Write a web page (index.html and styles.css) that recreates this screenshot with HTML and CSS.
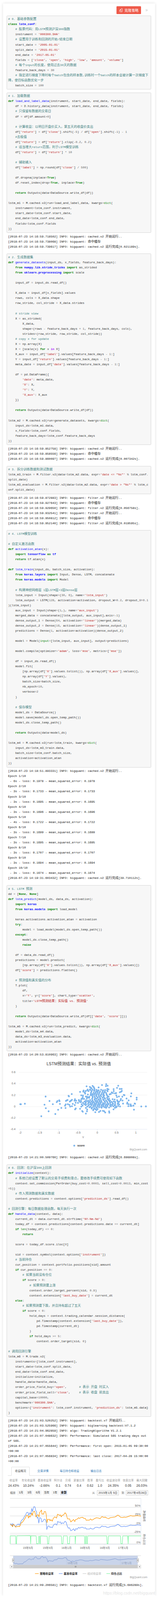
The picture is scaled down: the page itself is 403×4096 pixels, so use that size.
FILE: index.html
```html
<!DOCTYPE html>
<html lang="zh">
<head>
<meta charset="utf-8">
<title>LSTM</title>
<link rel="stylesheet" href="styles.css">
</head>
<body>
<main class="card">
<header class="head">
<a class="clone"><svg class="clone-ico" viewBox="0 0 16 18"><path d="M8 1.2h3.6a2.2 2.2 0 0 1 2.2 2.2v10.8a2.2 2.2 0 0 1-2.2 2.2H7.5"/><path d="M5.5 5 1.6 9v5.3a1.7 1.7 0 0 0 1.7 1.7h3.2a1.7 1.7 0 0 0 1.7-1.7V5zM5.5 5v4H1.6"/></svg>克隆策略</a>
<svg class="fold" viewBox="0 0 12 12"><path d="M1.5 1.5 6 6l-4.500 4.500M6.500 1.500 11 6l-4.500 4.500"/></svg>
</header>

<pre class="code"><i class="c"># 0. <i class="z">基础参数配置</i></i>
<i class="k">class</i> <i class="n">lstm_conf</i>:
    <i class="c"># <i class="z">股票代码：用</i>LSTM<i class="z">预测沪深</i>300<i class="z">指数</i></i>
    instrument <i class="o">=</i> <i class="s">'000300.SHA'</i>
    <i class="c"># <i class="z">设置用于训练和回测的开始</i>/<i class="z">结束日期</i></i>
    start_date <i class="o">=</i> <i class="s">'2005-01-01'</i>
    split_date <i class="o">=</i> <i class="s">'2015-01-01'</i>
    end_date <i class="o">=</i> <i class="s">'2017-05-01'</i>
    fields <i class="o">=</i> [<i class="s">'close'</i>, <i class="s">'open'</i>, <i class="s">'high'</i>, <i class="s">'low'</i>, <i class="s">'amount'</i>, <i class="s">'volume'</i>]
    <i class="c"># <i class="z">每个</i>input<i class="z">的长度，使用过去</i>30<i class="z">天的数据</i></i>
    feature_back_days <i class="o">=</i> <i class="m">30</i>
    <i class="c"># <i class="z">指定进行梯度下降时每个</i>batch<i class="z">包含的样本数</i>,<i class="z">训练时一个</i>batch<i class="z">的样本会被计算一次梯度下</i></i>
<i class="c"><i class="z">降，使目标函数优化一步</i></i>
    batch_size <i class="o">=</i> <i class="m">100</i></pre>

<pre class="code"><i class="c"># 1. <i class="z">加载数据</i></i>
<i class="k">def</i> <i class="f">load_and_label_data</i>(instrument, start_date, end_date, fields):
    df <i class="o">=</i> D<i class="o">.</i>history_data(instrument, start_date, end_date, fields)
    <i class="c"># <i class="z">只保留有数据的交易日</i></i>
    df <i class="o">=</i> df[df<i class="o">.</i>amount<i class="o">&gt;</i><i class="m">0</i>]

    <i class="c"># <i class="z">计算收益：以明日开盘价买入，第五天的收盘价卖出</i></i>
    df[<i class="s">'return'</i>] <i class="o">=</i> df[<i class="s">'close'</i>]<i class="o">.</i>shift(<i class="o">-</i><i class="m">5</i>) <i class="o">/</i> df[<i class="s">'open'</i>]<i class="o">.</i>shift(<i class="o">-</i><i class="m">1</i>) <i class="o">-</i> <i class="m">1</i>
    <i class="c">#<i class="z">去极值</i></i>
    df[<i class="s">'return'</i>] <i class="o">=</i> df[<i class="s">'return'</i>]<i class="o">.</i>clip(<i class="o">-</i><i class="m">0.2</i>, <i class="m">0.2</i>)
    <i class="c"># <i class="z">适当增大</i>return<i class="z">范围，利于</i>LSTM<i class="z">模型训练</i></i>
    df[<i class="s">'return'</i>] <i class="o">=</i> df[<i class="s">'return'</i>] <i class="o">*</i> <i class="m">10</i>

    <i class="c"># <i class="z">辅助输入</i></i>
    df[<i class="s">'label'</i>] <i class="o">=</i> np<i class="o">.</i>round(df[<i class="s">'close'</i>] <i class="o">/</i> <i class="m">500</i>)

    df<i class="o">.</i>dropna(inplace<i class="o">=</i><i class="k">True</i>)
    df<i class="o">.</i>reset_index(drop<i class="o">=</i><i class="k">True</i>, inplace<i class="o">=</i><i class="k">True</i>)

    <i class="k">return</i> Outputs(data<i class="o">=</i>DataSource<i class="o">.</i>write_df(df))

lstm_m1 <i class="o">=</i> M<i class="o">.</i>cached<i class="o">.</i>v2(run<i class="o">=</i>load_and_label_data, kwargs<i class="o">=</i><i class="b">dict</i>(
    instrument<i class="o">=</i>lstm_conf<i class="o">.</i>instrument,
    start_date<i class="o">=</i>lstm_conf<i class="o">.</i>start_date,
    end_date<i class="o">=</i>lstm_conf<i class="o">.</i>end_date,
    fields<i class="o">=</i>lstm_conf<i class="o">.</i>fields
))</pre>
<pre class="log">[2018-07-23 14:16:59.718502] INFO: bigquant: cached.v2 <i class="z">开始运行</i>..
[2018-07-23 14:16:59.738068] INFO: bigquant: <i class="z">命中缓存</i>
[2018-07-23 14:16:59.739617] INFO: bigquant: cached.v2 <i class="z">运行完成</i>[0.021189s].</pre>

<pre class="code"><i class="c"># 2. <i class="z">生成数据集</i></i>
<i class="k">def</i> <i class="f">generate_datasets</i>(input_ds, x_fields, feature_back_days):
    <i class="k">from</i> <i class="n">numpy.lib.stride_tricks</i> <i class="k">import</i> as_strided
    <i class="k">from</i> <i class="n">sklearn.preprocessing</i> <i class="k">import</i> scale

    input_df <i class="o">=</i> input_ds<i class="o">.</i>read_df()

    X_data <i class="o">=</i> input_df[x_fields]<i class="o">.</i>values
    rows, cols <i class="o">=</i> X_data<i class="o">.</i>shape
    row_stride, col_stride <i class="o">=</i> X_data<i class="o">.</i>strides

    <i class="c"># stride view</i>
    X <i class="o">=</i> as_strided(
        X_data,
        shape<i class="o">=</i>(rows <i class="o">-</i> feature_back_days <i class="o">+</i> <i class="m">1</i>, feature_back_days, cols),
        strides<i class="o">=</i>(row_stride, row_stride, col_stride))
    <i class="c"># copy x for update</i>
    X <i class="o">=</i> np<i class="o">.</i>array(X)
    X <i class="o">=</i> [scale(x) <i class="k">for</i> x <i class="w">in</i> X]
    X_aux <i class="o">=</i> input_df[<i class="s">'label'</i>]<i class="o">.</i>values[feature_back_days <i class="o">-</i> <i class="m">1</i>:]
    Y <i class="o">=</i> input_df[<i class="s">'return'</i>]<i class="o">.</i>values[feature_back_days <i class="o">-</i> <i class="m">1</i>:]
    meta_date <i class="o">=</i> input_df[<i class="s">'date'</i>]<i class="o">.</i>values[feature_back_days <i class="o">-</i> <i class="m">1</i>:]

    df <i class="o">=</i> pd<i class="o">.</i>DataFrame({
        <i class="s">'date'</i>: meta_date,
        <i class="s">'X'</i>: X,
        <i class="s">'Y'</i>: Y,
        <i class="s">'X_aux'</i>: X_aux
    })

    <i class="k">return</i> Outputs(data<i class="o">=</i>DataSource<i class="o">.</i>write_df(df))

lstm_m2 <i class="o">=</i> M<i class="o">.</i>cached<i class="o">.</i>v2(run<i class="o">=</i>generate_datasets, kwargs<i class="o">=</i><i class="b">dict</i>(
    input_ds<i class="o">=</i>lstm_m1<i class="o">.</i>data,
    x_fields<i class="o">=</i>lstm_conf<i class="o">.</i>fields,
    feature_back_days<i class="o">=</i>lstm_conf<i class="o">.</i>feature_back_days
))</pre>
<pre class="log">[2018-07-23 14:16:59.852758] INFO: bigquant: cached.v2 <i class="z">开始运行</i>..
[2018-07-23 14:16:59.858556] INFO: bigquant: <i class="z">命中缓存</i>
[2018-07-23 14:16:59.860097] INFO: bigquant: cached.v2 <i class="z">运行完成</i>[0.007342s].</pre>

<pre class="code"><i class="c"># 3. <i class="z">拆分训练数据和测试数据</i></i>
lstm_m3_train <i class="o">=</i> M<i class="o">.</i>filter<i class="o">.</i>v2(data<i class="o">=</i>lstm_m2<i class="o">.</i>data, expr<i class="o">=</i><i class="s">'date &lt;= "%s"'</i> <i class="o">%</i> lstm_conf<i class="o">.</i>
split_date)
lstm_m3_evaluation <i class="o">=</i> M<i class="o">.</i>filter<i class="o">.</i>v2(data<i class="o">=</i>lstm_m2<i class="o">.</i>data, expr<i class="o">=</i><i class="s">'date &gt; "%s"'</i> <i class="o">%</i> lstm_c
onf<i class="o">.</i>split_date)</pre>
<pre class="log">[2018-07-23 14:16:59.872883] INFO: bigquant: filter.v2 <i class="z">开始运行</i>..
[2018-07-23 14:16:59.927643] INFO: bigquant: <i class="z">命中缓存</i>
[2018-07-23 14:16:59.929650] INFO: bigquant: filter.v2 <i class="z">运行完成</i>[0.056758s].
[2018-07-23 14:16:59.932541] INFO: bigquant: filter.v2 <i class="z">开始运行</i>..
[2018-07-23 14:16:59.950812] INFO: bigquant: <i class="z">命中缓存</i>
[2018-07-23 14:16:59.952140] INFO: bigquant: filter.v2 <i class="z">运行完成</i>[0.019595s].</pre>

<pre class="code"><i class="c"># 4. LSTM<i class="z">模型训练</i></i>

<i class="c"># <i class="z">自定义激活函数</i></i>
<i class="k">def</i> <i class="f">activation_atan</i>(x):
    <i class="k">import</i> <i class="n">tensorflow</i> <i class="k">as</i> <i class="n">tf</i>
    <i class="k">return</i> tf<i class="o">.</i>atan(x)

<i class="k">def</i> <i class="f">lstm_train</i>(input_ds, batch_size, activation):
    <i class="k">from</i> <i class="n">keras.layers</i> <i class="k">import</i> Input, Dense, LSTM, concatenate
    <i class="k">from</i> <i class="n">keras.models</i> <i class="k">import</i> Model

    <i class="c"># <i class="z">构建神经网络层</i> 1<i class="z">层</i>LSTM<i class="z">层</i>+3<i class="z">层</i>Dense<i class="z">层</i></i>
    lstm_input <i class="o">=</i> Input(shape<i class="o">=</i>(<i class="m">30</i>, <i class="m">6</i>), name<i class="o">=</i><i class="s">'lstm_input'</i>)
    lstm_output <i class="o">=</i> LSTM(<i class="m">128</i>, activation<i class="o">=</i>activation, dropout_W<i class="o">=</i><i class="m">0.2</i>, dropout_U<i class="o">=</i><i class="m">0.1</i>
)(lstm_input)
    aux_input <i class="o">=</i> Input(shape<i class="o">=</i>(<i class="m">1</i>,), name<i class="o">=</i><i class="s">'aux_input'</i>)
    merged_data <i class="o">=</i> concatenate([lstm_output, aux_input],axis<i class="o">=-</i><i class="m">1</i>)
    dense_output_1 <i class="o">=</i> Dense(<i class="m">64</i>, activation<i class="o">=</i><i class="s">'linear'</i>)(merged_data)
    dense_output_2 <i class="o">=</i> Dense(<i class="m">16</i>, activation<i class="o">=</i><i class="s">'linear'</i>)(dense_output_1)
    predictions <i class="o">=</i> Dense(<i class="m">1</i>, activation<i class="o">=</i>activation)(dense_output_2)

    model <i class="o">=</i> Model(<i class="b">input</i><i class="o">=</i>[lstm_input, aux_input], output<i class="o">=</i>predictions)

    model<i class="o">.</i>compile(optimizer<i class="o">=</i><i class="s">'adam'</i>, loss<i class="o">=</i><i class="s">'mse'</i>, metrics<i class="o">=</i>[<i class="s">'mse'</i>])

    df <i class="o">=</i> input_ds<i class="o">.</i>read_df()
    model<i class="o">.</i>fit(
        [np<i class="o">.</i>array(df[<i class="s">'X'</i>]<i class="o">.</i>values<i class="o">.</i>tolist()), np<i class="o">.</i>array(df[<i class="s">'X_aux'</i>]<i class="o">.</i>values)],
        np<i class="o">.</i>array(df[<i class="s">'Y'</i>]<i class="o">.</i>values),
        batch_size<i class="o">=</i>batch_size,
        nb_epoch<i class="o">=</i><i class="m">10</i>,
        verbose<i class="o">=</i><i class="m">2</i>
    )

    <i class="c"># <i class="z">保存模型</i></i>
    model_ds <i class="o">=</i> DataSource()
    model<i class="o">.</i>save(model_ds<i class="o">.</i>open_temp_path())
    model_ds<i class="o">.</i>close_temp_path()

    <i class="k">return</i> Outputs(data<i class="o">=</i>model_ds)

lstm_m4 <i class="o">=</i> M<i class="o">.</i>cached<i class="o">.</i>v2(run<i class="o">=</i>lstm_train, kwargs<i class="o">=</i><i class="b">dict</i>(
    input_ds<i class="o">=</i>lstm_m3_train<i class="o">.</i>data,
    batch_size<i class="o">=</i>lstm_conf<i class="o">.</i>batch_size,
    activation<i class="o">=</i>activation_atan
))</pre>
<pre class="log">[2018-07-23 14:18:51.893331] INFO: bigquant: cached.v2 <i class="z">开始运行</i>..
Epoch 1/10
 - 6s - loss: 0.1978 - mean_squared_error: 0.1978
Epoch 2/10
 - 3s - loss: 0.1733 - mean_squared_error: 0.1733
Epoch 3/10
 - 3s - loss: 0.1695 - mean_squared_error: 0.1695
Epoch 4/10
 - 3s - loss: 0.1696 - mean_squared_error: 0.1696
Epoch 5/10
 - 4s - loss: 0.1722 - mean_squared_error: 0.1722
Epoch 6/10
 - 3s - loss: 0.1699 - mean_squared_error: 0.1699
Epoch 7/10
 - 3s - loss: 0.1695 - mean_squared_error: 0.1695
Epoch 8/10
 - 3s - loss: 0.1707 - mean_squared_error: 0.1707
Epoch 9/10
 - 3s - loss: 0.1694 - mean_squared_error: 0.1694
Epoch 10/10
 - 3s - loss: 0.1674 - mean_squared_error: 0.1674
[2018-07-23 14:19:31.603432] INFO: bigquant: cached.v2 <i class="z">运行完成</i>[39.710112s].</pre>

<pre class="code"><i class="c"># 5. LSTM <i class="z">预测</i></i>
dd <i class="o">=</i> [<i class="k">None</i>, <i class="k">None</i>]
<i class="k">def</i> <i class="f">lstm_predict</i>(model_ds, data_ds, activation):
    <i class="k">import</i> <i class="n">keras</i>
    <i class="k">from</i> <i class="n">keras.models</i> <i class="k">import</i> load_model

    keras<i class="o">.</i>activations<i class="o">.</i>activation_atan <i class="o">=</i> activation
    <i class="k">try</i>:
        model <i class="o">=</i> load_model(model_ds<i class="o">.</i>open_temp_path())
    <i class="k">except</i>:
        model_ds<i class="o">.</i>close_temp_path()
        <i class="k">raise</i>

    df <i class="o">=</i> data_ds<i class="o">.</i>read_df()
    predictions <i class="o">=</i> model<i class="o">.</i>predict(
        [np<i class="o">.</i>array(df[<i class="s">'X'</i>]<i class="o">.</i>values<i class="o">.</i>tolist()), np<i class="o">.</i>array(df[<i class="s">'X_aux'</i>]<i class="o">.</i>values)])
    df[<i class="s">'score'</i>] <i class="o">=</i> predictions<i class="o">.</i>flatten()

    <i class="c"># <i class="z">预测值和真实值的分布</i></i>
    T<i class="o">.</i>plot(
        df,
        x<i class="o">=</i><i class="s">'Y'</i>, y<i class="o">=</i>[<i class="s">'score'</i>], chart_type<i class="o">=</i><i class="s">'scatter'</i>,
        title<i class="o">=</i><i class="s">'LSTM<i class="z">预测结果：实际值</i> vs. <i class="z">预测值</i>'</i>
    )

    <i class="k">return</i> Outputs(data<i class="o">=</i>DataSource<i class="o">.</i>write_df(df[[<i class="s">'date'</i>, <i class="s">'score'</i>]]))

lstm_m5 <i class="o">=</i> M<i class="o">.</i>cached<i class="o">.</i>v2(run<i class="o">=</i>lstm_predict, kwargs<i class="o">=</i><i class="b">dict</i>(
    model_ds<i class="o">=</i>lstm_m4<i class="o">.</i>data,
    data_ds<i class="o">=</i>lstm_m3_evaluation<i class="o">.</i>data,
    activation<i class="o">=</i>activation_atan
))</pre>
<pre class="log tight">[2018-07-23 14:20:53.810963] INFO: bigquant: cached.v2 <i class="z">开始运行</i>..</pre>

<svg class="scatter" viewBox="29 4568 626 415.7">
  <text class="title" x="341" y="4602.5">LSTM预测结果：实际值 vs. 预测值</text>
  <path class="grid" d="M82.4 4632.2H637.5M82.4 4681.4H637.5M82.4 4730.3H637.5M82.4 4780.2H637.5M82.4 4829.4H637.5"/>
  <path class="xaxis" d="M82.4 4878.2H637.5M87.6 4878.2v10M171.3 4878.2v10M254.6 4878.2v10M338.3 4878.2v10M421.5 4878.2v10M504.3 4878.2v10M588.5 4878.2v10"/>
  <g class="ylab">
    <text x="67.2" y="4636">0.6</text><text x="67.2" y="4685">0.4</text><text x="67.2" y="4734.5">0.2</text><text x="67.2" y="4784">0</text><text x="67.2" y="4833.5">-0.2</text><text x="67.2" y="4882.5">-0.4</text>
  </g>
  <g class="xlab">
    <text x="88" y="4897.5">-2</text><text x="171.5" y="4897.5">-1.5</text><text x="255" y="4897.5">-1</text><text x="338.5" y="4897.5">-0.5</text><text x="421.5" y="4897.5">0</text><text x="505" y="4897.5">0.5</text><text x="588.5" y="4897.5">1</text>
    <text x="360" y="4917">Y</text>
  </g>
  <path class="dots" transform="translate(0 4640) scale(.43365 .36994)" d="M203 351h.1M209 352h.1M249 346h.1M456 262h.1M445 357h.1M458 398h.1M495 314h.1M528 351h.1M486 434h.1M413 492h.1M553 466h.1M567 327h.1M574 315h.1M592 306h.1M595 316h.1M599 348h.1M581 416h.1M613 395h.1M655 396h.1M650 368h.1M657 354h.1M659 313h.1M667 307h.1M675 302h.1M678 351h.1M694 359h.1M685 253h.1M689 260h.1M717 233h.1M701 379h.1M719 375h.1M727 348h.1M698 320h.1M706 313h.1M712 308h.1M719 300h.1M747 361h.1M745 310h.1M749 293h.1M756 334h.1M761 310h.1M750 412h.1M757 401h.1M779 336h.1M788 302h.1M790 313h.1M801 326h.1M809 306h.1M811 325h.1M800 405h.1M812 380h.1M816 351h.1M821 431h.1M827 439h.1M800 208h.1M812 248h.1M829 250h.1M827 268h.1M815 287h.1M825 287h.1M840 290h.1M832 204h.1M835 192h.1M850 222h.1M847 215h.1M851 228h.1M856 197h.1M865 143h.1M875 180h.1M873 190h.1M885 198h.1M878 239h.1M858 262h.1M870 265h.1M877 270h.1M868 283h.1M893 265h.1M890 277h.1M898 150h.1M897 180h.1M906 160h.1M914 165h.1M925 138h.1M935 150h.1M940 160h.1M944 172h.1M985 156h.1M1019 128h.1M1061 118h.1M1058 140h.1M1075 136h.1M1072 172h.1M1084 178h.1M1135 176h.1M1136 198h.1M1169 161h.1M1181 136h.1M1197 173h.1M1215 173h.1M1217 196h.1M1210 205h.1M1197 212h.1M1116 214h.1M1107 232h.1M1095 236h.1M1128 221h.1M1148 225h.1M1160 222h.1M1162 249h.1M1169 268h.1M1188 261h.1M1222 264h.1M1236 243h.1M1243 246h.1M1264 285h.1M1285 307h.1M1312 225h.1M1307 260h.1M1365 275h.1M1365 297h.1M1272 332h.1M1270 345h.1M1285 351h.1M1305 354h.1M1282 374h.1M1303 372h.1M1313 372h.1M1333 368h.1M1345 343h.1M1349 346h.1M1411 378h.1M1457 377h.1M1338 415h.1M1229 344h.1M1199 378h.1M1224 309h.1M1204 306h.1M1208 290h.1M1134 412h.1M1148 393h.1M1163 387h.1M1090 435h.1M1092 450h.1M1051 448h.1M1041 433h.1M1028 429h.1M1003 430h.1M989 442h.1M952 445h.1M931 422h.1M916 402h.1M858 461h.1M869 434h.1M871 413h.1M858 395h.1M872 379h.1M894 387h.1
  M905 185h.1M925 182h.1M945 188h.1M965 184h.1M985 188h.1M1010 183h.1M1030 190h.1M1050 186h.1M1070 192h.1M915 200h.1M940 197h.1M962 203h.1M978 198h.1M1000 204h.1M1025 199h.1M1048 205h.1M1075 200h.1M910 215h.1M935 219h.1M955 213h.1M975 217h.1M995 212h.1M1020 218h.1M1040 214h.1M1060 220h.1M908 230h.1M925 234h.1M950 228h.1M968 233h.1M990 229h.1M1012 235h.1M1035 231h.1M1065 236h.1M905 245h.1M920 249h.1M940 243h.1M960 248h.1M985 244h.1M1005 249h.1M1030 243h.1M1040 250h.1M1068 245h.1M925 260h.1M945 264h.1M965 258h.1M990 263h.1M1010 259h.1M1035 264h.1M1075 258h.1M1085 264h.1M925 275h.1M950 279h.1M975 273h.1M1000 278h.1M1025 274h.1M1045 280h.1M1070 276h.1M920 290h.1M945 294h.1M965 288h.1M985 293h.1M1005 289h.1M1030 294h.1M1050 288h.1M1075 293h.1M1090 288h.1M860 305h.1M880 309h.1M900 303h.1M925 308h.1M950 304h.1M970 309h.1M990 303h.1M1010 308h.1M1035 303h.1M1060 309h.1M1085 304h.1M1100 309h.1M1125 293h.1M1145 297h.1M1170 305h.1M1190 322h.1M845 320h.1M860 324h.1M878 318h.1M895 323h.1M915 319h.1M935 324h.1M955 318h.1M975 323h.1M995 319h.1M1015 324h.1M1045 318h.1M1070 323h.1M1095 319h.1M1115 324h.1M1135 318h.1M1150 323h.1M1175 319h.1M830 335h.1M855 339h.1M885 333h.1M905 338h.1M925 334h.1M945 339h.1M965 333h.1M985 338h.1M1005 334h.1M1030 339h.1M1050 333h.1M1075 338h.1M1100 334h.1M1125 339h.1M1150 333h.1M1180 338h.1M840 350h.1M860 354h.1M880 348h.1M900 353h.1M920 349h.1M940 354h.1M960 348h.1M980 353h.1M1000 349h.1M1020 354h.1M1040 348h.1M1060 353h.1M1085 349h.1M1105 354h.1M1130 348h.1M1150 353h.1M1175 349h.1M1190 354h.1M825 367h.1M855 361h.1M885 366h.1M915 362h.1M935 367h.1M955 361h.1M975 366h.1M995 362h.1M1015 367h.1M1035 361h.1M1055 366h.1M1075 362h.1M1100 367h.1M1120 361h.1M1145 366h.1M1180 372h.1M905 380h.1M930 384h.1M950 378h.1M970 383h.1M990 379h.1M1010 384h.1M1030 378h.1M1050 383h.1M1070 379h.1M1090 390h.1M1108 378h.1M1132 376h.1M1160 375h.1M915 395h.1M945 399h.1M965 393h.1M990 388h.1M1015 392h.1M1045 386h.1M1060 394h.1M935 410h.1M955 413h.1M975 408h.1M965 420h.1"/>
  <circle class="lg-dot" cx="321.8" cy="4949" r="4"/>
  <text class="lg" x="335" y="4953">score</text>
  <text class="credit" x="637.5" y="4969">BigQuant.com</text>
</svg>

<pre class="log">[2018-07-23 14:21:00.509760] INFO: bigquant: cached.v2 <i class="z">运行完成</i>[6.698808s].</pre>

<pre class="code"><i class="c"># 6. <i class="z">回测：在沪深</i>300<i class="z">上回测</i></i>
<i class="k">def</i> <i class="f">initialize</i>(context):
    <i class="c"># <i class="z">系统已经设置了默认的交易手续费和滑点，要修改手续费可使用如下函数</i></i>
    context<i class="o">.</i>set_commission(PerOrder(buy_cost<i class="o">=</i><i class="m">0.0003</i>, sell_cost<i class="o">=</i><i class="m">0.0013</i>, min_cost
<i class="o">=</i><i class="m">5</i>))
    <i class="c"># <i class="z">传入预测数据和真实数据</i></i>
    context<i class="o">.</i>predictions <i class="o">=</i> context<i class="o">.</i>options[<i class="s">'prediction_ds'</i>]<i class="o">.</i>read_df()

<i class="c"># <i class="z">回测引擎：每日数据处理函数，每天执行一次</i></i>
<i class="k">def</i> <i class="f">handle_data</i>(context, data):
    current_dt <i class="o">=</i> data<i class="o">.</i>current_dt<i class="o">.</i>strftime(<i class="s">'%Y-%m-%d'</i>)
    today_df <i class="o">=</i> context<i class="o">.</i>predictions[context<i class="o">.</i>predictions<i class="o">.</i>date <i class="o">==</i> current_dt]
    <i class="k">if</i> <i class="b">len</i>(today_df) <i class="o">&lt;=</i> <i class="m">0</i>:
        <i class="k">return</i>

    score <i class="o">=</i> today_df<i class="o">.</i>score<i class="o">.</i>iloc[<i class="m">0</i>]

    sid <i class="o">=</i> context<i class="o">.</i>symbol(context<i class="o">.</i>options[<i class="s">'instrument'</i>])
    <i class="c"># <i class="z">当前持仓</i></i>
    cur_position <i class="o">=</i> context<i class="o">.</i>portfolio<i class="o">.</i>positions[sid]<i class="o">.</i>amount
    <i class="k">if</i> cur_position <i class="o">==</i> <i class="m">0</i>:
        <i class="c"># <i class="z">如果当前没有仓位</i></i>
        <i class="k">if</i> score <i class="o">&gt;</i> <i class="m">0</i>:
            <i class="c"># <i class="z">如果预测要上涨</i></i>
            context<i class="o">.</i>order_target_percent(sid, <i class="m">0.9</i>)
            context<i class="o">.</i>extension[<i class="s">'last_buy_date'</i>] <i class="o">=</i> current_dt
    <i class="k">else</i>:
        <i class="c"># <i class="z">如果预测要下跌，并且持有超过了五天</i></i>
        <i class="k">if</i> score <i class="o">&lt;</i> <i class="m">0</i>:
            hold_days <i class="o">=</i> context<i class="o">.</i>trading_calendar<i class="o">.</i>session_distance(
                pd<i class="o">.</i>Timestamp(context<i class="o">.</i>extension[<i class="s">'last_buy_date'</i>]),
                pd<i class="o">.</i>Timestamp(current_dt)
            )
            <i class="k">if</i> hold_days <i class="o">&gt;=</i> <i class="m">5</i>:
                context<i class="o">.</i>order_target(sid, <i class="m">0</i>)

<i class="c"># <i class="z">调用回测引擎</i></i>
lstm_m6 <i class="o">=</i> M<i class="o">.</i>trade<i class="o">.</i>v2(
    instruments<i class="o">=</i>[lstm_conf<i class="o">.</i>instrument],
    start_date<i class="o">=</i>lstm_conf<i class="o">.</i>split_date,
    end_date<i class="o">=</i>lstm_conf<i class="o">.</i>end_date,
    initialize<i class="o">=</i>initialize,
    handle_data<i class="o">=</i>handle_data,
    order_price_field_buy<i class="o">=</i><i class="s">'open'</i>,       <i class="c"># <i class="z">表示</i> <i class="z">开盘</i> <i class="z">时买入</i></i>
    order_price_field_sell<i class="o">=</i><i class="s">'close'</i>,     <i class="c"># <i class="z">表示</i> <i class="z">收盘</i> <i class="z">前卖出</i></i>
    capital_base<i class="o">=</i><i class="m">10000</i>,
    benchmark<i class="o">=</i><i class="s">'000300.SHA'</i>,
    options<i class="o">=</i>{<i class="s">'instrument'</i>: lstm_conf<i class="o">.</i>instrument, <i class="s">'prediction_ds'</i>: lstm_m5<i class="o">.</i>data}
)</pre>
<pre class="log tight">[2018-07-23 14:21:03.520252] INFO: bigquant: backtest.v7 <i class="z">开始运行</i>..
[2018-07-23 14:21:03.525966] INFO: bigquant: biglearning backtest:V7.1.2
[2018-07-23 14:21:04.962859] INFO: algo: TradingAlgorithm V1.2.1
[2018-07-23 14:21:07.048632] INFO: Performance: Simulated 565 trading days out
of 565.
[2018-07-23 14:21:07.055644] INFO: Performance: first open: 2015-01-05 09:30:00
+00:00
[2018-07-23 14:21:07.056834] INFO: Performance: last close: 2017-04-28 15:00:00
+00:00</pre>

<nav class="tabs">
  <a class="tab on">收益概况</a><a class="tab">交易详情</a><a class="tab">每日持仓和收益</a><a class="tab">输出日志</a>
</nav>

<section class="stats">
  <span class="st-l">收益率</span><span class="st-l">年化收益率</span><span class="st-l">基准收益率</span><span class="st-l">阿尔法</span><span class="st-l">贝塔</span><span class="st-l">夏普比率</span><span class="st-l">胜率</span><span class="st-l">盈亏比</span><span class="st-l">收益波动率</span><span class="st-l">信息比率</span><span class="st-l">最大回撤</span>
  <span class="st-v">24.43%</span><span class="st-v">10.24%</span><span class="st-v">-2.66%</span><span class="st-v">0.1</span><span class="st-v">0.74</span><span class="st-v">0.4</span><span class="st-v">0.62</span><span class="st-v">1.0</span><span class="st-v">24.35%</span><span class="st-v">0.05</span><span class="st-v">26.03%</span>
</section>

<div class="range">
  <span class="r-lab">缩放</span>
  <span class="r-btn">1月</span><span class="r-btn">3月</span><span class="r-btn">6月</span><span class="r-btn">当年</span><span class="r-btn">1年</span><span class="r-btn on">全部</span>
  <span class="r-from">从</span><span class="r-in">2015年1月 5日</span><span class="r-to">到</span><span class="r-in">2017年4月28日</span>
</div>

<svg class="stock" viewBox="29 6465 626 372.3">
  <path class="g2" d="M43.4 6471.7H610.6M43.4 6510.3H610.6M43.4 6547.3H610.6M43.4 6585.3H610.6M43.4 6622.3H610.6M43.4 6629.3H610.6M43.4 6668.3H610.6"/>
  <path class="xaxis" d="M43.4 6670H610.6M610.6 6471.7V6670M121.4 6670v8M207.3 6670v8M288.4 6670v8M367.7 6670v8M453.6 6670v8M533.4 6670v8"/>
  <g class="ylab">
    <text x="608.4" y="6508">50%</text><text x="608.4" y="6545">25%</text><text x="608.4" y="6583">0%</text><text x="608.4" y="6620">-25%</text><text x="608.4" y="6665.5">0%</text>
  </g>
  <g class="xlab">
    <text x="121.5" y="6688.5">15年5月</text><text x="207.5" y="6688.5">15年9月</text><text x="288.5" y="6688.5">16年1月</text><text x="368" y="6688.5">16年5月</text><text x="454" y="6688.5">16年9月</text><text x="533.5" y="6688.5">17年1月</text>
    <text x="625" y="6547.3" transform="rotate(90 625 6547.3) translate(0 4)">净值曲线</text>
    <text x="625" y="6649" transform="rotate(90 625 6649) translate(0 4)">持仓占比</text>
  </g>
  <g transform="translate(0 6380) scale(.43365 .33333)">
    <polyline class="l-green" points="103,862 103,762 157,762 160,862 165,862 169,760 304,758 307,862 310,760 362,762 366,862 384,862 387,765 396,765 398,862 402,862 404,762 472,765 476,862 487,862 491,763 613,763 617,862 629,862 633,762 672,762 676,862 694,862 698,764 750,764 752,862 756,762 844,762 848,862 853,862 856,762 864,762 866,862 872,862 876,762 1066,762 1070,862 1079,862 1083,762 1204,762 1208,862 1222,862 1226,762 1276,762 1280,862 1282,762 1408,762"/>
    <polyline class="l-blue" points="103,600 110,610 118,625 123,598 128,640 135,605 145,625 155,640 165,625 182,605 195,620 205,590 215,560 230,545 245,510 255,490 268,455 280,455 288,495 298,460 308,480 318,405 325,445 338,382 350,385 358,435 365,445 372,530 380,520 388,595 397,525 410,530 418,580 430,570 440,545 452,545 462,580 468,678 478,635 490,632 500,650 510,645 522,655 535,620 545,608 555,605 568,620 577,572 590,585 605,580 612,605 622,590 635,600 650,570 662,585 670,625 682,660 695,655 708,695 720,685 735,668 748,695 758,665 770,675 785,650 795,660 810,650 825,648 840,660 855,655 862,672 880,672 895,672 905,658 920,672 935,670 950,652 970,648 985,655 1000,655 1018,632 1035,640 1055,638 1070,650 1085,650 1100,640 1125,635 1150,632 1178,610 1190,620 1208,640 1225,640 1240,635 1255,640 1285,630 1305,620 1325,625 1345,625 1370,618 1385,617 1408,625"/>
    <polyline class="l-orange" points="103,610 110,620 118,620 125,642 130,612 137,612 145,625 155,645 170,640 185,635 195,640 205,620 212,592 225,583 235,565 245,545 255,525 262,505 270,490 278,502 285,530 292,500 300,518 308,500 318,465 326,495 332,450 345,440 352,470 360,515 368,490 385,490 390,515 395,460 405,445 415,425 420,480 430,475 437,480 442,445 455,445 463,490 466,540 470,590 475,548 495,545 500,565 510,550 522,570 532,535 545,515 555,520 565,530 575,480 585,485 595,495 605,488 612,515 620,495 635,490 650,460 662,480 668,510 675,540 695,540 708,580 720,565 735,548 748,575 755,548 770,545 785,525 795,535 808,522 825,520 840,535 855,535 860,558 875,555 892,557 905,540 915,555 930,550 945,535 965,525 985,530 1000,538 1018,510 1035,520 1055,518 1070,532 1085,538 1100,525 1125,520 1150,515 1178,490 1190,500 1205,520 1225,522 1240,516 1255,520 1280,510 1305,497 1325,503 1345,502 1370,497 1385,500 1408,503"/>
  </g>
  <path class="g2" d="M43.4 6719H610.6"/>
  <rect class="nav-mask" x="57.2" y="6719" width="539.5" height="40"/>
  <path class="nav-grid" d="M288.4 6719v40M521.3 6719v40"/>
  <g class="nav-lab">
    <text x="292" y="6754.7">16年1月</text><text x="526" y="6754.7">17年1月</text>
  </g>
  <g transform="translate(0 6380) scale(.43365 .33333)">
    <polyline class="l-nav" points="133,1110 145,1112 155,1122 165,1115 180,1125 205,1122 228,1122 240,1100 255,1095 285,1062 300,1058 310,1072 325,1058 335,1065 345,1040 360,1032 375,1058 403,1055 410,1035 425,1025 435,1045 455,1035 470,1060 480,1100 485,1082 510,1085 530,1090 540,1072 570,1068 580,1050 610,1055 625,1055 650,1040 665,1050 675,1075 695,1078 708,1095 725,1085 742,1095 755,1080 780,1078 800,1070 820,1072 850,1085 885,1085 900,1078 920,1082 955,1070 990,1078 1005,1065 1040,1070 1070,1075 1100,1070 1150,1055 1180,1070 1200,1070 1240,1065 1280,1058 1320,1060 1360,1055 1376,1062"/>
  </g>
  <rect class="handle" x="53.2" y="6730.7" width="8" height="16" rx="1"/>
  <rect class="handle" x="592.7" y="6730.7" width="8" height="16" rx="1"/>
  <path class="grip" d="M56.2 6734.7v8M58.2 6734.7v8M595.7 6734.7v8M597.7 6734.7v8"/>
  <rect class="sb-track" x="43.4" y="6759" width="567.2" height="14.3"/>
  <rect class="sb-thumb" x="57.2" y="6759" width="539.5" height="14.3"/>
  <path class="grip" d="M325 6763v6.5M327.5 6763v6.5M330 6763v6.5"/>
  <path class="sb-arrow" d="M52 6763.500v5.500l-3-2.750zM603.400 6763.500v5.500l3-2.750z"/>
  <path class="lk-o" d="M151.8 6796.3h16"/>
  <path class="lk-b" d="M255 6796.3h16"/>
  <path class="lk-g" d="M358 6796.3h16"/>
  <path class="lk-n" d="M461 6796.3h16"/>
  <text class="lg" x="172.6" y="6800.5">策略收益率</text>
  <text class="lg" x="276" y="6800.5">基准收益率</text>
  <text class="lg off" x="378.6" y="6800.5">相对收益率</text>
  <text class="lg" x="481" y="6800.5">持仓占比</text>
  <text class="credit" x="638.3" y="6816.5">BigQuant.com</text>
</svg>

<pre class="log last">[2018-07-23 14:21:09.206581] INFO: bigquant: backtest.v7 <i class="z">运行完成</i>[5.686289s].</pre>
<span class="mark">https://blog.csdn.net/bigquant</span>
</main>
</body>
</html>
```
FILE: styles.css
```css
* { box-sizing: border-box; }
html, body { margin: 0; padding: 0; background: #fff; }
body {
  width: 403px;
  font-family: "Liberation Sans", "Noto Sans CJK SC", sans-serif;
  color: #333;
  overflow-x: hidden;
}
i { font-style: normal; }

.card {
  position: relative;
  overflow: hidden;
  margin: 9.49px 0 0 7.71px;
  width: 390.2px;
  padding: 0 9.49px 19.2px;
  background: #fff;
  box-shadow: 0 0 7px rgba(0, 0, 0, .13);
}

.head {
  display: flex;
  justify-content: flex-end;
  align-items: center;
  height: 19.6px;
  margin: 6.52px 0 4.15px;
}
.clone {
  display: flex;
  align-items: center;
  gap: 4.2px;
  height: 19.6px;
  width: 62.3px;
  padding-left: 6.2px;
  background: #ee5a4a;
  border-radius: 1.5px;
  color: #fff;
  font-size: 9.1px;
}
.clone-ico { width: 9.4px; height: 10.4px; flex: none; }
.clone-ico path { fill: none; stroke: #fff; stroke-width: 1.5; }
.fold { width: 6.4px; height: 6.4px; margin: 0 9.5px 0 10.8px; flex: none; }
.fold path { fill: none; stroke: #999; stroke-width: 1.3; }

pre {
  margin: 0;
  font-family: "Liberation Mono", "Noto Sans CJK SC", monospace;
  font-size: 7.59px;
  line-height: 13.046px;
  white-space: pre;
  overflow: hidden;
}
.z {
  font-family: "Noto Sans CJK SC", sans-serif;
  font-size: 8.3px;
  line-height: 0;
}
.code {
  margin-bottom: 7.3px;
  padding: 2.56px 2.85px;
  background: #f7f7f7;
  border: 1px solid #d6d6d6;
  border-radius: 1.5px;
  color: #333;
}
.code:has(+ .log) { margin-bottom: 0; }
.log {
  padding: 3.56px 0 10.67px 3.56px;
  color: #111;
}
.log.tight { padding-bottom: 0; }
.log.last { padding: 0 0 0 3.56px; }
.c { color: #408080; }
.k { color: #008000; font-weight: 700; }
.f { color: #0000ff; }
.n { color: #0000ff; font-weight: 700; }
.s { color: #ba2121; }
.m, .o { color: #666; }
.b { color: #008000; }
.w { color: #aa22ff; font-weight: 700; }

.scatter, .stock { display: block; width: 371.2px; }
.scatter { height: 246.5px; }
.stock { height: 220.77px; margin-top: 3.56px; }
.title { font-size: 18px; fill: #333; text-anchor: middle; }
.grid { fill: none; stroke: #e6e6e6; stroke-width: 1; }
.xaxis { fill: none; stroke: #ccd6eb; stroke-width: 1; }
.ylab text { font-size: 12px; fill: #666; text-anchor: end; }
.xlab text { font-size: 12px; fill: #666; text-anchor: middle; }
.dots { fill: none; stroke: #7cb5ec; stroke-width: 4.6; stroke-linecap: round; vector-effect: non-scaling-stroke; }
.lg-dot { fill: #7cb5ec; }
.lg { font-size: 12px; font-weight: 700; fill: #333; }
.lg.off { fill: #ccc; }
.credit { font-size: 12px; fill: #999; text-anchor: end; }

.tabs {
  display: flex;
  gap: 10.08px;
  height: 22.6px;
  margin: 7.12px 3.5px 0 2.96px;
  padding-left: 8.89px;
  border-bottom: 1px solid #ddd;
}
.tab {
  height: 22.6px;
  padding: 0 8.5px;
  border: 1px solid transparent;
  line-height: 20.6px;
  font-size: 7.12px;
  color: #337ab7;
  border-radius: 1.5px 1.5px 0 0;
}
.tab.on {
  background: #fff;
  border-color: #ddd #ddd #fff;
  color: #555;
}

.stats {
  display: grid;
  grid-template-columns: 29.65px 46.85px 35.8px 33.7px 16.7px 40.3px 16.7px 33.2px 36.2px 40px 30px;
  grid-auto-rows: 12.45px;
  margin: 6.23px 0 0 2.96px;
  text-align: center;
  white-space: nowrap;
  line-height: 12.45px;
}
.st-l { font-size: 7.12px; color: #999; }
.st-v { font-size: 8.3px; color: #333; }

.range {
  display: flex;
  align-items: center;
  height: 13.2px;
  margin-top: 5.75px;
  padding: 0 8.89px 0 8.54px;
  font-size: 7.12px;
}
.r-lab { width: 18.5px; color: #666; }
.r-btn {
  width: 19px;
  height: 13.2px;
  margin-right: 2.96px;
  background: #f7f7f7;
  border-radius: 1.2px;
  color: #333;
  text-align: center;
  line-height: 12.6px;
}
.r-btn.on { background: #e6ebf5; color: #000; font-weight: 700; }
.r-from { margin-left: auto; margin-right: 5.3px; color: #666; }
.r-to { margin: 0 4.4px 0 6.5px; color: #666; }
.r-in {
  width: 56.3px;
  height: 13px;
  border: 1px solid #ccc;
  color: #333;
  font-size: 7.4px;
  line-height: 11px;
  text-align: center;
  white-space: nowrap;
}

.g2 { fill: none; stroke: #ccc; stroke-width: 1.3; }
.l-green, .l-blue, .l-orange, .l-nav {
  fill: none;
  stroke-linejoin: round;
  vector-effect: non-scaling-stroke;
}
.l-green { stroke: #7cf5a0; stroke-width: 1.3; }
.l-blue { stroke: #6c98f8; stroke-width: 1.3; }
.l-orange { stroke: #ff9a0a; stroke-width: 1.3; }
.l-nav { stroke: #6a88c9; stroke-width: .8; }
.nav-mask { fill: #c9d4ea; }
.nav-grid { fill: none; stroke: #b4c1de; stroke-width: 1; }
.nav-lab text { font-size: 12px; fill: #8b99b3; }
.handle { fill: #f2f2f2; stroke: #999; stroke-width: 1; }
.grip { fill: none; stroke: #666; stroke-width: 1; }
.sb-track { fill: #f2f2f2; stroke: #ccc; stroke-width: 1; }
.sb-thumb { fill: #ccc; }
.sb-arrow { fill: #333; }
.lk-o, .lk-b, .lk-g, .lk-n { fill: none; stroke-width: 2; }
.lk-o { stroke: #ff9a0a; }
.lk-b { stroke: #6c98f8; }
.lk-g { stroke: #ccc; }
.lk-n { stroke: #7cf5a0; }

.mark {
  position: absolute;
  right: 0;
  bottom: 0;
  font-size: 10.2px;
  line-height: 10.2px;
  color: #e4e4e4;
  white-space: nowrap;
}
```
